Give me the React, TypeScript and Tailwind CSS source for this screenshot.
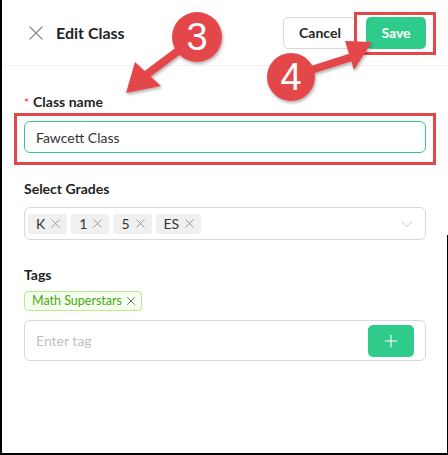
import { X, ChevronDown, Plus } from 'lucide-react';

const grades = ['K', '1', '5', 'ES'];

function GradeChip({ label }: { label: string }) {
  return (
    <span className="flex h-5 items-center gap-[3px] rounded-[3px] bg-[#f0f0f0] pl-[8px] pr-[4px] text-[14px] text-[#333]">
      {label}
      <X size={15} strokeWidth={1.4} className="text-[#8c8c8c]" />
    </span>
  );
}

function Annotations() {
  return (
    <svg className="pointer-events-none absolute inset-0" width="448" height="455" viewBox="0 0 448 455">
      <defs>
        <filter id="sh" x="-30%" y="-30%" width="160%" height="160%">
          <feDropShadow dx="1" dy="2" stdDeviation="1.5" floodColor="#000" floodOpacity="0.3" />
        </filter>
      </defs>
      {/* ===== Highlight boxes ===== */}
      <rect x="355.5" y="13.5" width="79" height="40" fill="none" stroke="#e4474a" strokeWidth="3" />
      <rect x="15.5" y="114.5" width="419" height="49" fill="none" stroke="#e4474a" strokeWidth="3" />

      {/* ===== Arrow 3 ===== */}
      <g filter="url(#sh)" fill="#e4474a">
        <line x1="182" y1="48" x2="146" y2="75" stroke="#e4474a" strokeWidth="8" />
        <polygon points="126,93 135,62 161,86" />
        <circle cx="197" cy="37" r="25" />
      </g>
      <text x="197" y="50" textAnchor="middle" fill="#fff" fontSize="38" fontFamily="'Liberation Sans', Arial, sans-serif">3</text>

      {/* ===== Arrow 4 ===== */}
      <g filter="url(#sh)" fill="#e4474a">
        <line x1="305" y1="72" x2="352" y2="57" stroke="#e4474a" strokeWidth="8" />
        <polygon points="372,42 345,41 354,70" />
        <circle cx="291" cy="77" r="24" />
      </g>
      <text x="291" y="90" textAnchor="middle" fill="#fff" fontSize="38" fontFamily="'Liberation Sans', Arial, sans-serif">4</text>
    </svg>
  );
}

export default function App() {
  return (
    <div className="relative h-[455px] w-[448px] overflow-hidden bg-white font-['Lato','Noto_Sans',sans-serif] text-[#262626]">
      {/* ===== Header ===== */}
      <div className="flex h-[66px] items-center border-b border-[#f0f0f0] pl-[24px] pr-[22px]">
        <X size={24} strokeWidth={1.2} className="text-[#8c8c8c]" />
        <h1 className="ml-[8px] text-[16px] font-bold text-[#1f1f1f]">Edit Class</h1>
        <div className="ml-auto flex items-center gap-[9px]">
          <button className="h-[32px] w-[74px] rounded-[5px] border border-[#d9d9d9] bg-white text-[14px] font-bold text-[#262626]">
            Cancel
          </button>
          <button className="h-[32px] w-[60px] rounded-[5px] bg-[#2fcb8a] text-[14px] font-bold text-white">
            Save
          </button>
        </div>
      </div>

      {/* ===== Form ===== */}
      <div className="flex flex-col pl-6 pr-[22px] pt-[25px]">
        <label className="flex h-5 items-center text-[14px] font-bold text-[#1f1f1f]">
          <span className="mr-1 mt-1 text-[12px] text-[#ff4d4f]">*</span>
          Class name
        </label>
        <div className="mt-[10px] flex h-[32px] items-center rounded-[6px] border border-[#2fcb8a] px-[11px] text-[14px] text-[#333]">
          Fawcett Class
        </div>

        <label className="mt-[25px] flex h-5 items-center text-[14px] font-bold text-[#1f1f1f]">Select Grades</label>
        <div className="mt-[9px] flex h-[33px] items-center gap-[4px] rounded-[6px] border border-[#d9d9d9] pl-[3px] pr-[8px]">
          {grades.map((g) => (
            <GradeChip key={g} label={g} />
          ))}
          <ChevronDown size={20} strokeWidth={1.2} className="ml-auto text-[#c8c8c8]" />
        </div>

        <label className="mt-[24px] flex h-5 items-center text-[14px] font-bold text-[#1f1f1f]">Tags</label>
        <div className="mt-[7px] flex">
          <span className="flex h-5 items-center gap-[2px] rounded-[4px] border border-[#b7eb8f] bg-[#f6ffed] pl-[7px] pr-[3px] text-[12.5px] text-[#46a820]">
            Math Superstars
            <X size={14} strokeWidth={1.4} className="text-[#595959]" />
          </span>
        </div>
        <div className="mt-[9px] flex h-[41px] items-center rounded-[6px] border border-[#d9d9d9] pl-[11px] pr-[11px]">
          <span className="text-[14px] text-[#bfbfbf]">Enter tag</span>
          <button className="ml-auto flex h-[32px] w-[46px] items-center justify-center rounded-[5px] bg-[#2fcb8a] text-white">
            <Plus size={20} strokeWidth={1.3} />
          </button>
        </div>
      </div>

      {/* ===== Screenshot frame edges ===== */}
      <div className="absolute left-0 top-0 h-full w-[2px] bg-black" />
      <div className="absolute bottom-0 left-0 h-[2px] w-full bg-black" />
      <div className="absolute right-0 top-[235px] h-[220px] w-[1px] bg-black" />

      <Annotations />
    </div>
  );
}
